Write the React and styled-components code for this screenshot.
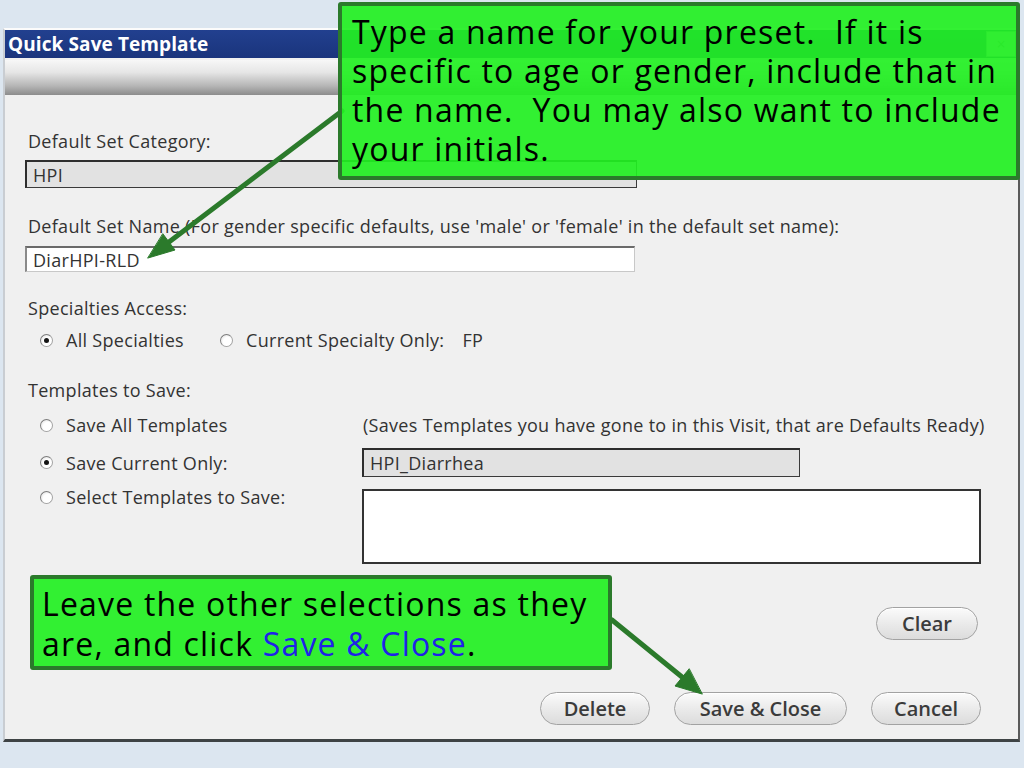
import React from 'react';
import styled, { createGlobalStyle } from 'styled-components';

const GlobalStyle = createGlobalStyle`
  html, body { margin: 0; padding: 0; }
  body {
    background: #dce6f0;
    font-family: "Open Sans", "DejaVu Sans", sans-serif;
  }
`;

const Screen = styled.div`
  position: relative;
  width: 1024px;
  height: 768px;
  overflow: hidden;
  box-sizing: border-box;
  padding-top: 28px;
  background: #dce6f0;
`;

const Dialog = styled.div`
  margin-left: 3px;
  width: 1017px;
  height: 714px;
  box-sizing: border-box;
  display: flex;
  flex-direction: column;
  background: #f0f0f0;
  border-top: 2px solid #fbfbfb;
  border-left: 2px solid #c9cdd2;
  border-right: 2px solid #5a5a5a;
  border-bottom: 3px solid #3e4345;
`;

const TitleBar = styled.div`
  flex: none;
  height: 28px;
  display: flex;
  align-items: center;
  justify-content: space-between;
  padding: 0 2px 0 3px;
  background: linear-gradient(#22408f, #1a347c);
  color: #fff;
  font-size: 19px;
  font-weight: 700;
  letter-spacing: 0.1px;
`;

const CloseBox = styled.div`
  width: 30px;
  height: 26px;
  box-sizing: border-box;
  display: flex;
  align-items: center;
  justify-content: center;
  border: 1px solid #8796ac;
  background: #d5dbe4;
  color: #8a8f96;
  font-size: 16px;
  font-weight: 400;
`;

const ShadeBar = styled.div`
  flex: none;
  height: 35px;
  margin-top: 2px;
  background: linear-gradient(#f7f7f7 0%, #e6e6e6 35%, #b4b4b4 75%, #8c8c8c 100%);
`;

const Body = styled.div`
  flex: 1;
  display: flex;
  flex-direction: column;
  padding: 0 37px 0 20px;
  color: #333;
  font-size: 18px;
  letter-spacing: 0.3px;
`;

const Label = styled.div`
  margin-top: ${p => p.$mt}px;
  margin-left: 3px;
  line-height: 20px;
  white-space: nowrap;
`;

const TextBox = styled.div`
  margin-top: ${p => p.$mt}px;
  width: ${p => p.$w}px;
  height: ${p => p.$h}px;
  box-sizing: border-box;
  display: flex;
  align-items: center;
  padding-left: 6px;
  background: ${p => (p.$readOnly ? '#e2e2e2' : '#fff')};
  border: 1px solid ${p => (p.$readOnly ? '#3a3a3a' : '#c8c8c8')};
  border-top: 2px solid ${p => (p.$readOnly ? '#2e2e2e' : '#6a6a6a')};
  border-left: 2px solid ${p => (p.$readOnly ? '#2e2e2e' : '#8a8a8a')};
  color: #333;
`;

const RadioRow = styled.div`
  margin-top: 11px;
  height: 22px;
  display: flex;
  align-items: center;
  gap: 36px;
  padding-left: 15px;
`;

const Choice = styled.div`
  display: flex;
  align-items: center;
  gap: 13px;
  white-space: nowrap;
  align-self: ${p => p.$align || 'center'};
  margin-top: ${p => p.$mt || 0}px;
  padding-left: ${p => p.$indent || 0}px;
`;

const Radio = styled.span`
  flex: none;
  width: 13px;
  height: 13px;
  box-sizing: border-box;
  border-radius: 50%;
  display: flex;
  align-items: center;
  justify-content: center;
  border: 1px solid #a3a3a3;
  border-left-color: #7d7d7d;
  border-top-color: #7d7d7d;
  background: radial-gradient(circle at 60% 60%, #ffffff 0 45%, #e2e2e2 85%);

  &::after {
    content: '';
    width: 5px;
    height: 5px;
    border-radius: 50%;
    background: ${p => (p.$on ? '#151515' : 'transparent')};
  }
`;

const Specialty = styled.span`
  margin-left: -18px;
`;

const TemplatesGrid = styled.div`
  margin-top: 14px;
  display: grid;
  grid-template-columns: 337px 619px;
  grid-template-rows: 22px 29px 75px;
  row-gap: 12px;
`;

const Note = styled.div`
  align-self: center;
  padding-left: 1px;
  line-height: 22px;
  white-space: nowrap;
`;

const ListBox = styled.div`
  width: 619px;
  height: 75px;
  box-sizing: border-box;
  background: #fff;
  border: 2px solid #333;
`;

const ButtonRow = styled.div`
  margin-top: ${p => p.$mt}px;
  margin-right: ${p => p.$mr || 0}px;
  display: flex;
  justify-content: flex-end;
  gap: 24px;
`;

const Button = styled.div`
  width: ${p => p.$w}px;
  height: 33px;
  box-sizing: border-box;
  display: flex;
  align-items: center;
  justify-content: center;
  border: 1.5px solid #a2a2a2;
  border-radius: 17px;
  background: linear-gradient(#fbfbfb, #e9e9e9 55%, #dcdcdc);
  box-shadow: inset 0 1px 0 #fff;
  color: #3b3b3b;
  font-size: 20px;
  font-weight: 600;
  letter-spacing: 0;
`;

const Callout = styled.div`
  position: absolute;
  left: ${p => p.$x}px;
  top: ${p => p.$y}px;
  width: ${p => p.$w}px;
  height: ${p => p.$h}px;
  box-sizing: border-box;
  padding: ${p => p.$pad};
  background: rgba(34, 240, 34, 0.92);
  border: 4px solid #2b7a2b;
  border-radius: 3px;
  color: #000;
  font-size: 32px;
  letter-spacing: 1.2px;
  line-height: ${p => p.$lh}px;
  white-space: pre;
`;

const Blue = styled.span`
  color: #1f22e8;
`;

const Arrows = styled.svg`
  position: absolute;
  left: 0;
  top: 0;
  pointer-events: none;
`;

export default function App() {
  return (
    <Screen>
      <GlobalStyle />
      <Dialog>
        <TitleBar>
          <span>Quick Save Template</span>
          <CloseBox>×</CloseBox>
        </TitleBar>
        <ShadeBar />
        <Body>
          <Label $mt={36}>Default Set Category:</Label>
          <TextBox $mt={9} $w={612} $h={28} $readOnly>HPI</TextBox>

          <Label $mt={28}>
            Default Set Name (For gender specific defaults, use 'male' or 'female' in the default set name):
          </Label>
          <TextBox $mt={10} $w={610} $h={26}>DiarHPI-RLD</TextBox>

          <Label $mt={26}>Specialties Access:</Label>
          <RadioRow>
            <Choice><Radio $on />All Specialties</Choice>
            <Choice><Radio />Current Specialty Only:</Choice>
            <Specialty>FP</Specialty>
          </RadioRow>

          <Label $mt={29}>Templates to Save:</Label>
          <TemplatesGrid>
            <Choice $indent={15}><Radio />Save All Templates</Choice>
            <Note>(Saves Templates you have gone to in this Visit, that are Defaults Ready)</Note>

            <Choice $indent={15}><Radio $on />Save Current Only:</Choice>
            <TextBox $mt={0} $w={438} $h={29} $readOnly>HPI_Diarrhea</TextBox>

            <Choice $indent={15} $align="start" $mt={-4}><Radio />Select Templates to Save:</Choice>
            <ListBox />
          </TemplatesGrid>

          <ButtonRow $mt={43} $mr={3}>
            <Button $w={102}>Clear</Button>
          </ButtonRow>
          <ButtonRow $mt={52}>
            <Button $w={110}>Delete</Button>
            <Button $w={173}>Save &amp; Close</Button>
            <Button $w={110}>Cancel</Button>
          </ButtonRow>
        </Body>
      </Dialog>

      <Arrows width="1024" height="768" viewBox="0 0 1024 768">
        <g stroke="#2b7a2b" strokeWidth="5" strokeLinecap="round" fill="#2b7a2b">
          <line x1="342" y1="111" x2="169" y2="242" />
          <polygon points="148,258 175,250 163,234" strokeWidth="1" />
          <line x1="612" y1="620" x2="682" y2="677" />
          <polygon points="702,694 675,686 689,669" strokeWidth="1" />
        </g>
      </Arrows>

      <Callout $x={338} $y={2} $w={682} $h={178} $pad="6px 0 0 10px" $lh={39}>
        {'Type a name for your preset.  If it is\nspecific to age or gender, include that in\nthe name.  You may also want to include\nyour initials.'}
      </Callout>
      <Callout $x={30} $y={575} $w={582} $h={95} $pad="5px 0 0 8px" $lh={40}>
        {'Leave the other selections as they\nare, and click '}<Blue>Save &amp; Close</Blue>.
      </Callout>
    </Screen>
  );
}
